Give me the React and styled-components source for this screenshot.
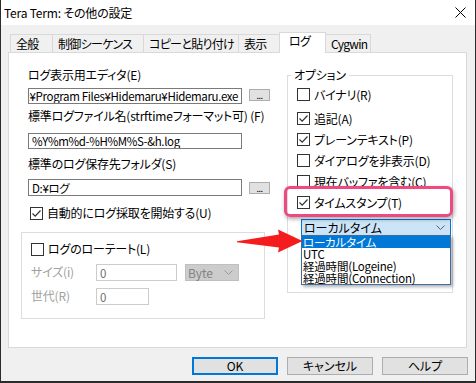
import React from 'react';
import styled, { createGlobalStyle } from 'styled-components';

const Global = createGlobalStyle`
  html, body { margin: 0; padding: 0; background: #fff; }
  body {
    font-family: "Noto Sans CJK JP", "Noto Sans", sans-serif;
    font-size: 12px;
    font-feature-settings: "palt";
    color: #000;
  }
  * { box-sizing: border-box; }
`;

const Window = styled.div`
  position: relative;
  width: 476px;
  height: 383px;
  border: 1px solid #2b2b2b;
  border-top: none;
  border-bottom-width: 2px;
  display: flex;
  flex-direction: column;
  background: #f0f0f0;
  overflow: hidden;
`;

const TitleBar = styled.div`
  height: 25px;
  flex: none;
  background: #fff;
  display: flex;
  align-items: center;
  justify-content: space-between;
  padding: 0 9px 0 3px;
  line-height: 16px;
  letter-spacing: -0.2px;
`;

const Body = styled.div`
  flex: 1;
  display: flex;
  flex-direction: column;
  padding: 9px 8px 0 7px;
`;

const TabRow = styled.div`
  display: flex;
  align-items: flex-end;
  height: 18px;
  padding-left: 2px;
  position: relative;
  z-index: 1;
`;

const Tab = styled.div`
  width: ${p => p.$w}px;
  height: ${p => (p.$active ? 21 : 18)}px;
  margin-left: -1px;
  margin-bottom: ${p => (p.$active ? -1 : 0)}px;
  padding: ${p => (p.$active ? '0 0 0 9px' : '1px 0 0 5px')};
  border: 1px solid #d9d9d9;
  border-bottom: none;
  background: ${p => (p.$active ? '#fff' : '#f0f0f0')};
  line-height: 16px;
  letter-spacing: -0.7px;
  white-space: nowrap;
  position: relative;
  z-index: ${p => (p.$active ? 2 : 0)};
  &:first-child { margin-left: 0; }
`;

const Panel = styled.div`
  height: 296px;
  flex: none;
  border: 1px solid #d9d9d9;
  background: #fff;
  display: flex;
  padding-left: 19px;
`;

const LeftCol = styled.div`
  width: 242px;
  display: flex;
  flex-direction: column;
`;

const Label = styled.div`
  line-height: 16px;
  margin-top: ${p => p.$mt}px;
  white-space: nowrap;
  letter-spacing: -0.2px;
  color: ${p => (p.$disabled ? '#a0a0a0' : '#000')};
  width: ${p => (p.$w ? `${p.$w}px` : 'auto')};
`;

const FieldRow = styled.div`
  display: flex;
  align-items: flex-start;
  margin-top: ${p => p.$mt}px;
`;

const Input = styled.div`
  width: ${p => p.$w}px;
  height: ${p => p.$h || 16}px;
  border: 1px solid ${p => (p.$disabled ? '#cccccc' : '#7a7a7a')};
  background: #fff;
  display: flex;
  align-items: center;
  justify-content: ${p => (p.$end ? 'flex-end' : 'flex-start')};
  padding: 0 3px;
  overflow: hidden;
  white-space: nowrap;
  font-size: 11.5px;
  letter-spacing: -0.35px;
  line-height: 14px;
  color: ${p => (p.$disabled ? '#6d6d6d' : '#000')};
`;

const SmallButton = styled.div`
  width: 21px;
  height: 12px;
  margin: ${p => p.$mt}px 0 0 7px;
  background: #e1e1e1;
  border: 1px solid #adadad;
  font-size: 9px;
  line-height: 12px;
  text-align: center;
  letter-spacing: -0.5px;
`;

const CheckRow = styled.div`
  display: flex;
  align-items: center;
  height: ${p => p.$h || 16}px;
  margin-top: ${p => p.$mt || 0}px;
  margin-bottom: ${p => p.$mb || 0}px;
  margin-left: ${p => p.$ml || 0}px;
  gap: 4px;
  white-space: nowrap;
  line-height: 16px;
  letter-spacing: -0.2px;
`;

const Box = styled.span`
  width: 13px;
  height: 13px;
  flex: none;
  border: 1px solid #333;
  background: #fff;
  display: flex;
  align-items: center;
  justify-content: center;
`;

const Group = styled.div`
  width: 244px;
  height: 87px;
  margin: 11px 0 0 -7px;
  border: 1px solid #dcdcdc;
  padding: 8px 0 0 9px;
  display: flex;
  flex-direction: column;
`;

const Combo = styled.div`
  position: relative;
  width: ${p => p.$w}px;
  height: 17px;
  margin-left: ${p => p.$ml || 0}px;
  display: flex;
  align-items: center;
  justify-content: space-between;
  padding: 0 5px 0 2px;
  line-height: 15px;
  background: ${p => (p.$open ? '#cce4f7' : '#cccccc')};
  border: 1px solid ${p => (p.$open ? '#0078d7' : '#bfbfbf')};
  color: ${p => (p.$open ? '#000' : '#838383')};
  white-space: nowrap;
`;

const RightCol = styled.div`
  width: 166px;
  margin-left: 17px;
`;

const Fieldset = styled.fieldset`
  margin: 14px 0 0 0;
  height: 226px;
  border: 1px solid #dcdcdc;
  padding: 1px 0 0 9px;
  min-width: 0;
`;

const Legend = styled.legend`
  padding: 0 3px;
  margin-left: -6px;
  line-height: 16px;
  letter-spacing: -0.2px;
`;

const DropList = styled.div`
  position: absolute;
  top: 100%;
  left: -1px;
  width: 150px;
  border: 1px solid #3c6e9f;
  background: #fff;
  box-shadow: 2px 2px 3px rgba(0, 0, 0, 0.3);
  z-index: 5;
  padding: 0;
`;

const DropItem = styled.div`
  height: 12px;
  line-height: 12px;
  padding-left: 1px;
  font-size: 11.5px;
  letter-spacing: -0.2px;
  white-space: nowrap;
  background: ${p => (p.$sel ? '#0078d7' : 'transparent')};
  color: ${p => (p.$sel ? '#fff' : '#000')};
`;

const Highlight = styled.div`
  position: absolute;
  left: 283px;
  top: 186px;
  width: 169px;
  height: 31px;
  border: 3px solid #ef4a80;
  border-radius: 6px;
  box-shadow: 1px 2px 4px rgba(0, 0, 0, 0.35);
  pointer-events: none;
  z-index: 3;
`;

const Arrow = styled.svg`
  position: absolute;
  left: 230px;
  top: 226px;
  z-index: 6;
`;

const ButtonRow = styled.div`
  display: flex;
  justify-content: flex-end;
  gap: 9px;
  margin: 9px -1px 0 0;
`;

const Button = styled.div`
  width: 86px;
  height: 18px;
  background: #e1e1e1;
  border: ${p => (p.$default ? '2px solid #0078d7' : '1px solid #adadad')};
  display: flex;
  align-items: center;
  justify-content: center;
  line-height: 14px;
`;

const Check = ({ on }) => (
  <Box>
    {on && (
      <svg width="11" height="11" viewBox="0 0 11 11">
        <path d="M1.5 5.5 L4.2 8.2 L9.5 2.5" fill="none" stroke="#333" strokeWidth="1.2" />
      </svg>
    )}
  </Box>
);

const Chevron = ({ color }) => (
  <svg width="9" height="5" viewBox="0 0 9 5">
    <path d="M0.5 0.5 L4.5 4.5 L8.5 0.5" fill="none" stroke={color} strokeWidth="1" />
  </svg>
);

const tabs = [
  ['全般', 43],
  ['制御シーケンス', 92],
  ['コピーと貼り付け', 96],
  ['表示', 42],
  ['ログ', 47, true],
  ['Cygwin', 46],
];

const options = [
  ['バイナリ(R)', false],
  ['追記(A)', true],
  ['プレーンテキスト(P)', true],
  ['ダイアログを非表示(D)', false],
  ['現在バッファを含む(C)', false],
  ['タイムスタンプ(T)', true],
];

export default function App() {
  return (
    <>
      <Global />
      <Window>
        <TitleBar>
          <span>Tera Term: その他の設定</span>
          <svg width="11" height="11" viewBox="0 0 11 11">
            <path d="M0.5 0.5 L10.5 10.5 M10.5 0.5 L0.5 10.5" stroke="#000" strokeWidth="1" />
          </svg>
        </TitleBar>
        <Body>
          <TabRow>
            {tabs.map(([t, w, a]) => (
              <Tab key={t} $w={w} $active={a}>{t}</Tab>
            ))}
          </TabRow>
          <Panel>
            <LeftCol>
              <Label $mt={14}>ログ表示用エディタ(E)</Label>
              <FieldRow $mt={5}>
                <Input $w={214} $end>C:¥Program Files¥Hidemaru¥Hidemaru.exe</Input>
                <SmallButton $mt={1}>...</SmallButton>
              </FieldRow>
              <Label $mt={4}>標準ログファイル名(strftimeフォーマット可) (F)</Label>
              <FieldRow $mt={9}>
                <Input $w={214}>%Y%m%d-%H%M%S-&amp;h.log</Input>
              </FieldRow>
              <Label $mt={7}>標準のログ保存先フォルダ(S)</Label>
              <FieldRow $mt={7}>
                <Input $w={214} $h={17}>D:¥ログ</Input>
                <SmallButton $mt={3}>...</SmallButton>
              </FieldRow>
              <CheckRow $mt={9} $ml={2}>
                <Check on />
                自動的にログ採取を開始する(U)
              </CheckRow>
              <Group>
                <CheckRow>
                  <Check />
                  ログのローテート(L)
                </CheckRow>
                <FieldRow $mt={7}>
                  <Label $mt={0} $w={65} $disabled>サイズ(i)</Label>
                  <Input $w={81} $h={17} $disabled>0</Input>
                  <Combo $w={54} $ml={8}>
                    <span>Byte</span>
                    <Chevron color="#9a9a9a" />
                  </Combo>
                </FieldRow>
                <FieldRow $mt={7}>
                  <Label $mt={0} $w={65} $disabled>世代(R)</Label>
                  <Input $w={53} $h={17} $disabled>0</Input>
                </FieldRow>
              </Group>
            </LeftCol>
            <RightCol>
              <Fieldset>
                <Legend>オプション</Legend>
                {options.map(([t, on], i) => (
                  <CheckRow key={t} $h={21} $mb={i === 0 ? 3 : 0}>
                    <Check on={on} />
                    {t}
                  </CheckRow>
                ))}
                <FieldRow $mt={6}>
                  <Combo $w={150} $ml={4} $open>
                    <span>ローカルタイム</span>
                    <Chevron color="#606060" />
                    <DropList>
                      <DropItem $sel>ローカルタイム</DropItem>
                      <DropItem>UTC</DropItem>
                      <DropItem>経過時間(Logeine)</DropItem>
                      <DropItem>経過時間(Connection)</DropItem>
                    </DropList>
                  </Combo>
                </FieldRow>
              </Fieldset>
            </RightCol>
          </Panel>
          <ButtonRow>
            <Button $default>OK</Button>
            <Button>キャンセル</Button>
            <Button>ヘルプ</Button>
          </ButtonRow>
        </Body>
        <Highlight />
        <Arrow width="76" height="30" viewBox="230 226 76 30">
          <polygon
            points="236,241.3 278,234.5 277,229.5 301.5,241 277,252.5 278,247.5 236,242.3"
            fill="#f41c1c"
          />
        </Arrow>
      </Window>
    </>
  );
}
